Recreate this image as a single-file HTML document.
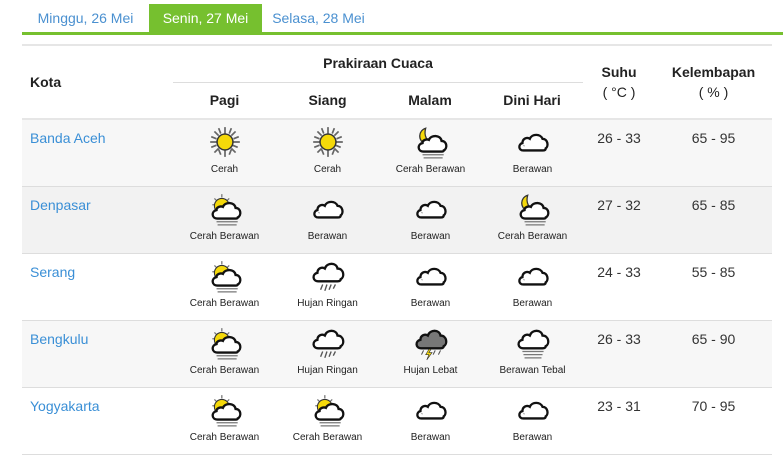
<!DOCTYPE html>
<html><head><meta charset="utf-8"><style>
body{margin:0;background:#fff;font-family:"Liberation Sans",sans-serif;width:783px;height:457px;overflow:hidden;position:relative}
.a{position:absolute}
.tab{position:absolute;top:4px;height:29px;line-height:29px;font-size:14px;color:#4a90d0;text-align:center}
.tab.on{background:#76c02f;color:#fff}
.h{position:absolute;font-size:14px;font-weight:bold;color:#222;text-align:center;line-height:16px}
.row{position:absolute;left:22px;width:750px;height:66px;border-bottom:1px solid #ddd}
.city{position:absolute;left:8px;top:10px;color:#3a8fd6;font-size:14px}
.w{position:absolute;top:0;width:103px;text-align:center;font-size:10px;color:#222}
.w svg{position:absolute;left:34px;top:4px;width:36px;height:36px}
.w div{position:absolute;left:0;right:0;top:44px}
.v{position:absolute;top:10px;text-align:center;font-size:14px;color:#333}
</style></head><body>
<svg width="0" height="0" style="position:absolute">
<defs>
<symbol id="cl" viewBox="0 0 34 34"><path d="M8 25 C3 25 3 19 7 18 C7 14 11 12 14 14 C16 9 24 9 26 14 C31 14 32 21 29 23 C29 25 27 25 26 25 Z" fill="#fff" stroke="#111" stroke-width="2.2"/><path d="M8 20l1 1" stroke="#999"/></symbol>
<symbol id="sun" viewBox="0 0 34 34"><g stroke="#666" stroke-width="1.6"><path d="M17 3v6M17 25v6M3 17h6M25 17h6M7 7l4 4M23 23l4 4M27 7l-4 4M11 23l-4 4M11 4l2 5M21 29l2-5M4 12l5 2M29 22l-5-2M23 4l-2 5M13 29l-2-5M4 22l5-2M30 12l-5 2"/></g><circle cx="17" cy="17" r="7.5" fill="#f5d90a" stroke="#333" stroke-width="1.4"/></symbol>
<symbol id="sc" viewBox="0 0 34 34"><g stroke="#777" stroke-width="1.2"><path d="M14 3v3M7 7l2 2M21 7l-2 2M5 13h3"/></g><circle cx="14" cy="14" r="7" fill="#f5d90a" stroke="#333"/><path d="M10 26 C4 26 4 19 9 18 C9 15 13 14 15 15 C17 10 26 10 27 16 C32 16 33 23 29 25 C29 26 28 26 27 26 Z" fill="#fff" stroke="#111" stroke-width="2.2"/><path d="M9 29h20M10 32h18" stroke="#777" stroke-width="1.2"/></symbol>
<symbol id="mc" viewBox="0 0 34 34"><path d="M12 4 C5 6 4 16 12 19 C15 20 18 19 19 17 C13 17 10 11 12 4Z" fill="#f5d90a" stroke="#333" stroke-width="1.2"/><path d="M10 26 C4 26 4 19 9 18 C9 15 13 14 15 15 C17 10 26 10 27 16 C32 16 33 23 29 25 C29 26 28 26 27 26 Z" fill="#fff" stroke="#111" stroke-width="2.2"/><path d="M9 29h20M10 32h18" stroke="#777" stroke-width="1.2"/></symbol>
<symbol id="rn" viewBox="0 0 34 34"><path d="M8 22 C2 22 2 15 7 14 C7 10 11 8 14 10 C16 4 25 4 26 10 C32 10 33 18 29 20 C29 22 27 22 26 22 Z" fill="#fff" stroke="#111" stroke-width="2.2"/><path d="M12 25l-2 5M16 25l-2 6M20 25l-2 5M24 25l-2 4" stroke="#555" stroke-width="1.3"/></symbol>
<symbol id="st" viewBox="0 0 34 34"><path d="M8 22 C2 22 2 15 7 14 C7 10 11 8 14 10 C16 4 25 4 26 10 C32 10 33 18 29 20 C29 22 27 22 26 22 Z" fill="#777" stroke="#111" stroke-width="2.2"/><path d="M15 23l-3 5h3l-2 5 5-7h-3l2-3z" fill="#f5d90a" stroke="#333" stroke-width=".6"/><path d="M21 24l-2 4M26 24l-2 4M10 24l-2 4" stroke="#555"/></symbol>
<symbol id="ct" viewBox="0 0 34 34"><path d="M8 22 C2 22 2 15 7 14 C7 10 11 8 14 10 C16 4 25 4 26 10 C32 10 33 18 29 20 C29 22 27 22 26 22 Z" fill="#fff" stroke="#111" stroke-width="2.2"/><path d="M7 25h20M8 28h18M9 31h16" stroke="#777" stroke-width="1.2"/></symbol>
</defs></svg>
<div class="a" style="left:22px;top:32px;width:761px;height:3px;background:#76c02f"></div>
<div class="tab" style="left:22px;width:127px">Minggu, 26 Mei</div>
<div class="tab on" style="left:149px;width:113px">Senin, 27 Mei</div>
<div class="tab" style="left:262px;width:113px">Selasa, 28 Mei</div>

<div class="a" style="left:22px;top:44px;width:750px;height:2px;background:#e6e6e6"></div>
<div class="a" style="left:173px;top:82px;width:410px;height:1px;background:#ddd"></div>
<div class="a" style="left:22px;top:118px;width:750px;height:2px;background:#e6e6e6"></div>
<div class="h" style="left:30px;top:74px">Kota</div>
<div class="h" style="left:173px;width:410px;top:55px">Prakiraan Cuaca</div>
<div class="h" style="left:173px;width:103px;top:92px">Pagi</div>
<div class="h" style="left:276px;width:103px;top:92px">Siang</div>
<div class="h" style="left:379px;width:102px;top:92px">Malam</div>
<div class="h" style="left:481px;width:102px;top:92px">Dini Hari</div>
<div class="h" style="left:583px;width:72px;top:64px">Suhu</div>
<div class="h" style="left:583px;width:72px;top:84px;font-weight:normal">( °C )</div>
<div class="h" style="left:655px;width:117px;top:64px">Kelembapan</div>
<div class="h" style="left:655px;width:117px;top:84px;font-weight:normal">( % )</div>

<div class="row" style="top:120px;background:#f7f7f7"><div class="city">Banda Aceh</div>
<div class="w" style="left:151px"><svg><use href="#sun"/></svg><div>Cerah</div></div>
<div class="w" style="left:254px"><svg><use href="#sun"/></svg><div>Cerah</div></div>
<div class="w" style="left:357px"><svg><use href="#mc"/></svg><div>Cerah Berawan</div></div>
<div class="w" style="left:459px"><svg><use href="#cl"/></svg><div>Berawan</div></div>
<div class="v" style="left:561px;width:72px">26 - 33</div><div class="v" style="left:633px;width:117px">65 - 95</div></div>

<div class="row" style="top:187px;background:#f2f2f2"><div class="city">Denpasar</div>
<div class="w" style="left:151px"><svg><use href="#sc"/></svg><div>Cerah Berawan</div></div>
<div class="w" style="left:254px"><svg><use href="#cl"/></svg><div>Berawan</div></div>
<div class="w" style="left:357px"><svg><use href="#cl"/></svg><div>Berawan</div></div>
<div class="w" style="left:459px"><svg><use href="#mc"/></svg><div>Cerah Berawan</div></div>
<div class="v" style="left:561px;width:72px">27 - 32</div><div class="v" style="left:633px;width:117px">65 - 85</div></div>

<div class="row" style="top:254px"><div class="city">Serang</div>
<div class="w" style="left:151px"><svg><use href="#sc"/></svg><div>Cerah Berawan</div></div>
<div class="w" style="left:254px"><svg><use href="#rn"/></svg><div>Hujan Ringan</div></div>
<div class="w" style="left:357px"><svg><use href="#cl"/></svg><div>Berawan</div></div>
<div class="w" style="left:459px"><svg><use href="#cl"/></svg><div>Berawan</div></div>
<div class="v" style="left:561px;width:72px">24 - 33</div><div class="v" style="left:633px;width:117px">55 - 85</div></div>

<div class="row" style="top:321px;background:#f7f7f7"><div class="city">Bengkulu</div>
<div class="w" style="left:151px"><svg><use href="#sc"/></svg><div>Cerah Berawan</div></div>
<div class="w" style="left:254px"><svg><use href="#rn"/></svg><div>Hujan Ringan</div></div>
<div class="w" style="left:357px"><svg><use href="#st"/></svg><div>Hujan Lebat</div></div>
<div class="w" style="left:459px"><svg><use href="#ct"/></svg><div>Berawan Tebal</div></div>
<div class="v" style="left:561px;width:72px">26 - 33</div><div class="v" style="left:633px;width:117px">65 - 90</div></div>

<div class="row" style="top:388px"><div class="city">Yogyakarta</div>
<div class="w" style="left:151px"><svg><use href="#sc"/></svg><div>Cerah Berawan</div></div>
<div class="w" style="left:254px"><svg><use href="#sc"/></svg><div>Cerah Berawan</div></div>
<div class="w" style="left:357px"><svg><use href="#cl"/></svg><div>Berawan</div></div>
<div class="w" style="left:459px"><svg><use href="#cl"/></svg><div>Berawan</div></div>
<div class="v" style="left:561px;width:72px">23 - 31</div><div class="v" style="left:633px;width:117px">70 - 95</div></div>
</body></html>
